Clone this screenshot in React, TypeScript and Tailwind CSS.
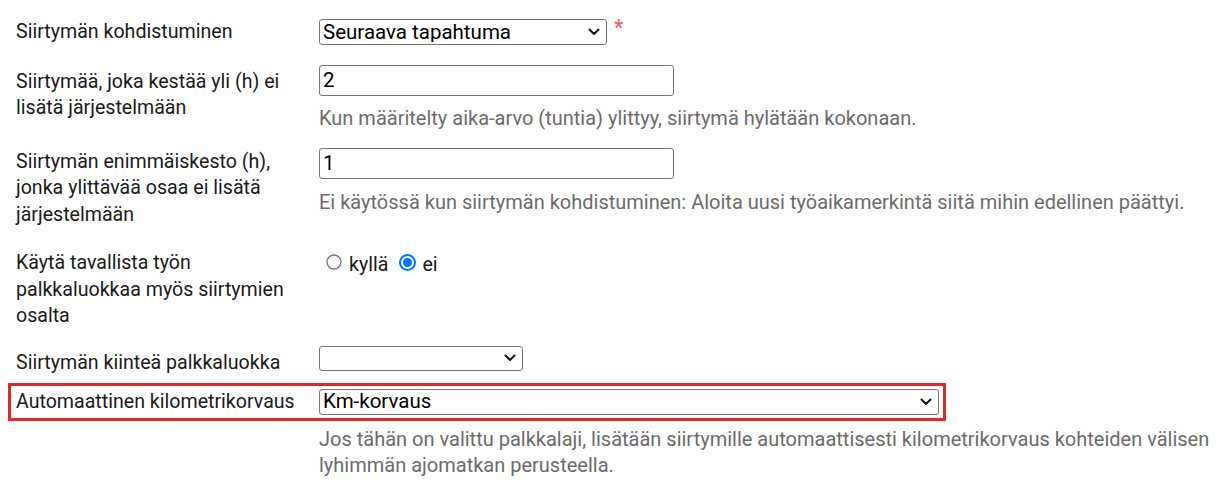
import React from "react";

const font = { fontFamily: "Roboto, 'Liberation Sans', sans-serif" };

const Label = ({ children, className = "" }: { children: React.ReactNode; className?: string }) => (
  <div className={`w-[311px] shrink-0 pl-2 pr-[12px] text-[19.6px] leading-[26.7px] text-[#1a1a1a] ${className}`}>
    {children}
  </div>
);

const Help = ({ children, className = "" }: { children: React.ReactNode; className?: string }) => (
  <div className={`text-[20px] text-[#6b6b6b] ${className}`}>{children}</div>
);

const Select = ({ value, className }: { value: string; className: string }) => (
  <div className={`relative shrink-0 ${className}`}>
    <select className="h-full w-full appearance-none rounded-[3px] border border-[#767676] bg-white pl-[3px] text-[20.5px] leading-none text-black">
      <option>{value}</option>
    </select>
    <svg
      className="pointer-events-none absolute right-[7px] top-1/2 -translate-y-1/2"
      width="12"
      height="8"
      viewBox="0 0 12 8"
      fill="none"
    >
      <path d="M1.5 1.5 6 6l4.5-4.5" stroke="#111" strokeWidth="2" strokeLinecap="round" strokeLinejoin="round" />
    </svg>
  </div>
);

const Radio = ({ checked }: { checked?: boolean }) =>
  checked ? (
    <svg width="17" height="17" viewBox="0 0 17 17" className="mb-[4px] shrink-0">
      <circle cx="8.5" cy="8.5" r="7.5" fill="white" stroke="#0075ff" strokeWidth="2" />
      <circle cx="8.5" cy="8.5" r="4.5" fill="#0075ff" />
    </svg>
  ) : (
    <svg width="16" height="16" viewBox="0 0 16 16" className="mb-[4px] shrink-0">
      <circle cx="8" cy="8" r="7" fill="white" stroke="#767676" strokeWidth="1.3" />
    </svg>
  );

export default function App() {
  return (
    <div className="min-h-[496px] bg-white pl-2" style={font}>
      {/* kohdistuminen */}
      <div className="flex items-start pt-[18px]">
        <Label className="mt-px">Siirtymän kohdistuminen</Label>
        <div className="mt-px flex items-start gap-[7px]">
          <Select value="Seuraava tapahtuma" className="h-[26px] w-[288px]" />
          <span className="-mt-[2px] text-[22px] leading-none text-[#ee5a5a]">*</span>
        </div>
      </div>

      {/* kesto yli */}
      <div className="mt-[19px] flex items-start">
        <Label className="mt-[4px]">Siirtymää, joka kestää yli (h) ei lisätä järjestelmään</Label>
        <div>
          <input
            defaultValue="2"
            className="h-[31px] w-[355px] rounded-[3px] border border-[#767676] px-[3px] text-[20.5px] text-black"
          />
          <Help className="mt-[10px] leading-[24px]">
            Kun määritelty aika-arvo (tuntia) ylittyy, siirtymä hylätään kokonaan.
          </Help>
        </div>
      </div>

      {/* enimmäiskesto */}
      <div className="mt-[17px] flex items-start">
        <Label className="mt-[2px]">Siirtymän enimmäiskesto (h), jonka ylittävää osaa ei lisätä järjestelmään</Label>
        <div className="mt-px">
          <input
            defaultValue="1"
            className="h-[31px] w-[355px] rounded-[3px] border border-[#767676] px-[3px] text-[20.5px] text-black"
          />
          <Help className="mt-[11px] leading-[24px]">
            Ei käytössä kun siirtymän kohdistuminen: Aloita uusi työaikamerkintä siitä mihin edellinen päättyi.
          </Help>
        </div>
      </div>

      {/* palkkaluokka radio */}
      <div className="mt-[20px] flex items-start">
        <Label className="mt-px">Käytä tavallista työn palkkaluokkaa myös siirtymien osalta</Label>
        <div className="flex items-center pt-[2px] text-[19.6px] leading-[27px] text-[#1a1a1a]">
          <label className="flex items-center gap-[7px] pl-[7px]">
            <Radio />
            kyllä
          </label>
          <label className="ml-[11px] flex items-center gap-[6px]">
            <Radio checked />
            ei
          </label>
        </div>
      </div>

      {/* kiinteä palkkaluokka */}
      <div className="mt-[16px] flex items-start">
        <Label className="mt-[4px]">Siirtymän kiinteä palkkaluokka</Label>
        <Select value="" className="h-[25px] w-[204px]" />
      </div>

      {/* kilometrikorvaus */}
      <div className="mt-[6px] flex h-[38px] w-[938px] items-center border-[3px] border-[#e32626]">
        <Label className="-ml-[3px] mt-px">Automaattinen kilometrikorvaus</Label>
        <Select value="Km-korvaus" className="h-[26px] w-[620px]" />
      </div>
      <Help className="ml-[311px] mt-[5px] w-[900px] leading-[26px]">
        Jos tähän on valittu palkkalaji, lisätään siirtymille automaattisesti kilometrikorvaus kohteiden välisen lyhimmän ajomatkan perusteella.
      </Help>
    </div>
  );
}
